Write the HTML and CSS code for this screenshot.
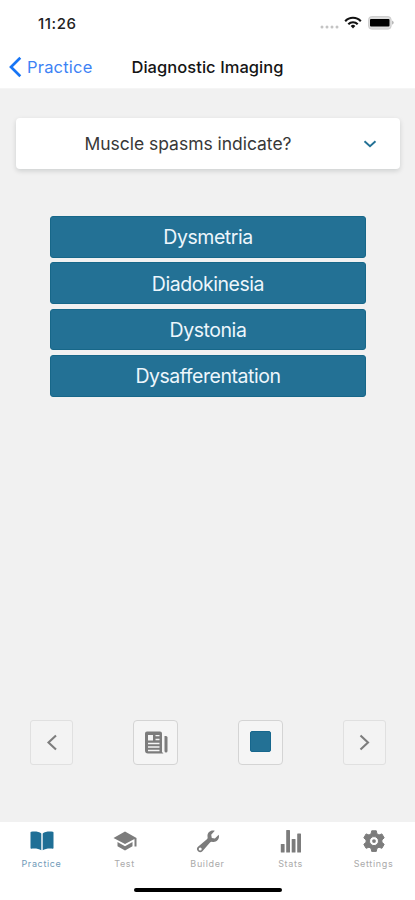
FILE: index.html
```html
<!DOCTYPE html>
<html lang="en">
<head>
<meta charset="utf-8">
<title>Diagnostic Imaging</title>
<link rel="stylesheet" href="styles.css">
</head>
<body>
<div class="app">
  <div class="status">
    <span class="time">11:26</span>
    <svg class="status-icons" width="76" height="16" viewBox="0 0 76 16">
      <g fill="#c4c4c4"><circle cx="3" cy="12" r="1.5"/><circle cx="8" cy="12" r="1.5"/><circle cx="13" cy="12" r="1.5"/><circle cx="18" cy="12" r="1.5"/></g>
      <g fill="none" stroke="#111" stroke-width="2.1"><path d="M26.200 6.200a10.600 10.600 0 0 1 15.600 0"/><path d="M29.300 9.200a6.600 6.600 0 0 1 9.400 0"/></g>
      <path d="M31.700 10.900a3.400 3.400 0 0 1 4.600 0L34 13.400z" fill="#111"/>
      <rect x="49.600" y="1.600" width="22.500" height="12.500" rx="3" fill="#ddd" stroke="#ccc" stroke-width="1"/>
      <rect x="51" y="4" width="19.500" height="7.500" rx="1" fill="#000"/>
      <path d="M73.300 5.500q2.500 2.100 0 4.200z" fill="#999"/>
    </svg>
  </div>
  <header class="nav">
    <a class="back"><svg width="13" height="22" viewBox="0 0 13 22"><path d="M11.300 1.800 2 11l9.300 9.200" fill="none" stroke="#1775f5" stroke-width="2.700"/></svg><span>Practice</span></a>
    <h1>Diagnostic Imaging</h1>
  </header>
  <main>
    <section class="question">
      <p>Muscle spasms indicate?</p>
      <svg width="14" height="10" viewBox="0 0 14 10"><path d="m1.500 2.300 5.500 5 5.500-5" fill="none" stroke="#237195" stroke-width="1.900"/></svg>
    </section>
    <div class="answers">
      <button>Dysmetria</button>
      <button>Diadokinesia</button>
      <button>Dystonia</button>
      <button>Dysafferentation</button>
    </div>
    <div class="tools">
      <button class="dim"><svg width="24" height="24" viewBox="0 0 24 24"><path d="m16 4.500-7.500 7 7.500 7" fill="none" stroke="#7d7d7d" stroke-width="2.100"/></svg></button>
      <button class="wide"><svg width="24" height="24" viewBox="0 0 24 24"><path fill="#7c7c7c" fill-rule="evenodd" d="M3 .5h13a2 2 0 0 1 2 2v18.500l1.500 1.500H4a3 3 0 0 1-3-3v-17a2 2 0 0 1 2-2zM4 4v5.500h5V4zm7.500 0v1.300h4V4zm0 3.800v1.400h4V7.800zM4 11.700v1.500h11.500v-1.500zm0 3.600v1.500h11.500v-1.500zm0 3.500v1.500h11.500v-1.500z"/><path fill="#7c7c7c" d="M20.500 5H22a1.500 1.500 0 0 1 1.500 1.500V20a1.500 1.500 0 0 1-3 0z"/></svg></button>
      <button class="wide"><span class="stop"></span></button>
      <button class="dim"><svg width="24" height="24" viewBox="0 0 24 24"><path d="m7.500 4.500 7.500 7-7.500 7" fill="none" stroke="#7d7d7d" stroke-width="2.100"/></svg></button>
    </div>
  </main>
  <footer>
    <nav class="tabs">
      <a class="tab active"><svg width="24" height="24" viewBox="0 0 24 24"><path fill="#1f6f96" d="M11.300 3.500v16.800C8.800 18.600 5 18.300 1.200 18.700Q.5 18.700.5 18V2.500q0-.7.7-.8c4.500-.5 8 .1 10.100 1.800zM12.700 3.500v16.800c2.500-1.700 6.300-2 10.100-1.600q.7 0 .7-.7V2.500q0-.7-.7-.8c-4.500-.5-8 .1-10.100 1.800z"/></svg><span>Practice</span></a>
      <a class="tab"><svg width="24" height="24" viewBox="0 0 24 24"><path fill="#7c7c7c" d="M12 1.500.5 8 12 14l9.500-5v7.500h2V8zM4.500 12v4.300L12 20.600l7.500-4.300V12L12 16.200z"/></svg><span>Test</span></a>
      <a class="tab"><svg width="24" height="24" viewBox="0 0 24 24"><path fill="#7c7c7c" fill-rule="evenodd" d="M18.800.8c-4-1.600-8.100 1.900-7.200 6.100.2 1.100-.2 1.900-1 2.700L2 16.800a3 3 0 0 0 4.400 4.400l7.400-8.500c.7-.8 1.600-1 2.700-.8 4.300.8 7.500-3.200 6.200-7.200l-3.800 3.700-3.100-.5-.6-3.200zM4.200 17.600a1.500 1.500 0 1 1 0 3 1.500 1.500 0 0 1 0-3z"/></svg><span>Builder</span></a>
      <a class="tab"><svg width="24" height="24" viewBox="0 0 24 24"><g fill="#7c7c7c"><rect x="1.800" y="14" width="3.800" height="8.500" rx=".6"/><rect x="7.200" y="0" width="3.800" height="22.500" rx=".6"/><rect x="12.700" y="9" width="3.800" height="13.500" rx=".6"/><rect x="18.200" y="3.500" width="3.800" height="19" rx=".6"/></g></svg><span>Stats</span></a>
      <a class="tab"><svg width="24" height="24" viewBox="0 0 24 24"><path fill="#7c7c7c" stroke="#7c7c7c" stroke-width="1" stroke-linejoin="round" fill-rule="evenodd" d="M9.700.8h4.600l.6 3 2.100 1.200 2.900-1.100 2.300 4-2.300 2v2.400l2.300 2-2.300 4-2.900-1.100-2.100 1.200-.6 3H9.700l-.6-3L7 17.200l-2.900 1.100-2.300-4 2.300-2V9.900l-2.300-2 2.300-4L7 5l2.100-1.200zM12 6.600a4.500 4.500 0 1 0 0 9 4.500 4.500 0 0 0 0-9z"/><circle cx="12" cy="11.100" r="1.900" fill="#7c7c7c"/></svg><span>Settings</span></a>
    </nav>
    <div class="home"></div>
  </footer>
</div>
</body>
</html>
```
FILE: styles.css
```css
* { box-sizing: border-box; }
body { margin: 0; font-family: Inter, "Liberation Sans", sans-serif; background: #f1f1f1; }
button { font: inherit; padding: 0; margin: 0; }
svg { display: block; flex: none; }
.app { width: 415px; height: 900px; display: flex; flex-direction: column; overflow: hidden; }
.status { height: 46px; background: #fff; display: flex; justify-content: space-between; align-items: center; padding: 0 20px 0 38px; }
.time { font-size: 15px; font-weight: 500; color: #222; letter-spacing: .55px; }
.nav { height: 43px; background: #fff; display: grid; grid-template-columns: 1fr auto 1fr; align-items: center; border-bottom: 1px solid #f5f5f5; }
.back { display: flex; align-items: center; gap: 5px; padding-left: 9px; color: #3d82f5; font-size: 16.500px; letter-spacing: .2px; }
.nav h1 { margin: 0; font-size: 16.500px; font-weight: 500; color: #151515; letter-spacing: .05px; white-space: nowrap; }
main { flex: 1; display: flex; flex-direction: column; padding: 29px 15px 0 16px; }
.question { height: 51px; display: flex; align-items: center; background: #fff; border-radius: 4px; box-shadow: 0 2px 5px rgba(0, 20, 20, .15); padding-right: 23px; }
.question p { flex: 1; margin: 0; padding-right: 3px; text-align: center; font-size: 17.500px; letter-spacing: -.03px; color: #383838; }
.answers { margin: 47px 34px 0; display: grid; gap: 4.500px; }
.answers button { height: 41.800px; padding-top: 1px; border: 1px solid #176789; border-radius: 3px; background: #237195; color: #edf6fc; font-size: 19.500px; letter-spacing: -.45px; }
.tools { margin: auto 14px 57px; display: flex; justify-content: space-between; }
.tools button { height: 45px; display: grid; place-items: center; background: #f5f5f5; border: 1px solid #d4d4d4; border-radius: 4px; }
.tools .dim { width: 43px; background: #f3f3f3; border-color: #e0e0e0; border-radius: 3px; }
.tools .wide { width: 45px; }
.stop { width: 21px; height: 21px; margin-bottom: 2px; border-radius: 2px; background: #237195; border: 1px solid #17678d; }
footer { height: 78px; background: #fff; display: flex; flex-direction: column; align-items: center; }
.tabs { width: 100%; height: 66px; display: grid; grid-template-columns: repeat(5, 1fr); padding-top: 8px; }
.tab { display: flex; flex-direction: column; align-items: center; gap: 4px; font-size: 9px; line-height: 12px; color: #aaa; letter-spacing: .65px; }
.active { color: #6f9ab8; }
.home { width: 148px; height: 4px; border-radius: 2px; background: #000; }
```
